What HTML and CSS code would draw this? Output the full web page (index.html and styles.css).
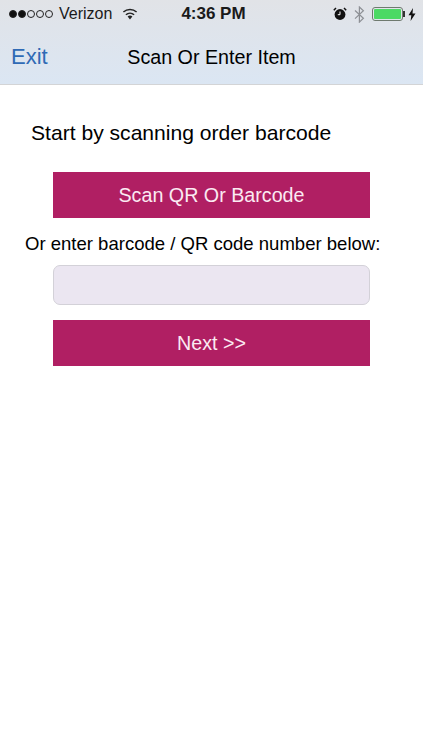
FILE: index.html
```html
<!DOCTYPE html>
<html lang="en">
<head>
  <meta charset="UTF-8" />
  <title>Scan Or Enter Item</title>
  <link rel="stylesheet" href="styles.css">
</head>
<body>
  <header class="top-bar">
    <div class="status-bar">
      <div class="status-left">
        <span class="signal">
          <i class="dot on"></i><i class="dot on"></i><i class="dot"></i><i class="dot"></i><i class="dot"></i>
        </span>
        <span class="carrier">Verizon</span>
        <svg class="wifi" width="16" height="12" viewBox="0 0 16 12">
          <path d="M8 11.5 5.6 8.6a3.6 3.6 0 0 1 4.8 0z" fill="#222"/>
          <path d="M3.9 6.8a6.2 6.2 0 0 1 8.2 0" fill="none" stroke="#222" stroke-width="1.5"/>
          <path d="M1.4 4a9.8 9.8 0 0 1 13.2 0" fill="none" stroke="#222" stroke-width="1.5"/>
        </svg>
      </div>
      <div class="status-time">4:36 PM</div>
      <div class="status-right">
        <svg width="14" height="14" viewBox="0 0 14 14">
          <circle cx="7" cy="7.5" r="5.4" fill="#111"/>
          <path d="M7 4.5v3.2H4.8" fill="none" stroke="#fff" stroke-width="1"/>
          <path d="M.8 3.2 3 1M13.2 3.2 11 1" stroke="#111" stroke-width="1.5"/>
        </svg>
        <svg width="11" height="17" viewBox="0 0 11 17">
          <path d="M1 4.5l8.4 7.8-4 3.8V1l4 3.8L1 12.6" fill="none" stroke="#8d9095" stroke-width="1.2"/>
        </svg>
        <div class="battery"><div class="battery-fill"></div></div>
        <svg width="8" height="13" viewBox="0 0 8 13">
          <path d="M5 0 .5 7.2h2.8L2.6 13 7.5 5.4H4.5z" fill="#111"/>
        </svg>
      </div>
    </div>
    <div class="nav-bar">
      <span class="nav-exit">Exit</span>
      <span class="nav-title">Scan Or Enter Item</span>
    </div>
  </header>

  <main class="content">
    <h1 class="lead">Start by scanning order barcode</h1>
    <button class="action">Scan QR Or Barcode</button>
    <p class="hint">Or enter barcode / QR code number below:</p>
    <input class="code-input" type="text" />
    <button class="action">Next &gt;&gt;</button>
  </main>
</body>
</html>
```

FILE: styles.css
```css
* {
  box-sizing: border-box;
}
body {
  margin: 0;
  background: #fff;
  color: #000;
  font-family: "Liberation Sans", Arial, sans-serif;
}
.top-bar {
  height: 85px;
  background: linear-gradient(#e1e3e7, #dbe6f3);
  border-bottom: 1px solid #d3d4d6;
}
.status-bar {
  height: 28px;
  padding: 0 7px 0 9px;
  display: grid;
  grid-template-columns: 1fr auto 1fr;
  align-items: center;
  font-size: 16px;
  color: #1a1a1a;
}
.status-left {
  display: flex;
  align-items: center;
}
.signal {
  display: flex;
  gap: 1px;
  margin-right: 6px;
}
.dot {
  width: 8px;
  height: 8px;
  border-radius: 50%;
  border: 1px solid #222;
}
.dot.on {
  background: #111;
}
.wifi {
  margin-left: 10px;
}
.status-time {
  margin-left: 2px;
  font-size: 17px;
  font-weight: bold;
}
.status-right {
  display: flex;
  align-items: center;
  justify-content: flex-end;
  gap: 7px;
}
.battery {
  position: relative;
  width: 31px;
  height: 14px;
  margin-right: -2px;
  padding: 1px;
  border: 1px solid #6f7a6f;
  border-radius: 3px;
}
.battery::after {
  content: "";
  position: absolute;
  right: -3px;
  top: 3px;
  width: 2px;
  height: 6px;
  background: #333;
}
.battery-fill {
  height: 100%;
  background: #4cd964;
  border-radius: 1px;
}
.nav-bar {
  position: relative;
  height: 56px;
  padding-top: 2px;
  display: flex;
  align-items: center;
  justify-content: center;
}
.nav-exit {
  position: absolute;
  left: 11px;
  font-size: 22px;
  color: #2f6ab5;
}
.nav-title {
  font-size: 19.7px;
}
.content {
  display: flex;
  flex-direction: column;
  align-items: center;
}
.lead {
  align-self: flex-start;
  margin: 35px 0 26px 31px;
  font-size: 21.1px;
  font-weight: normal;
  line-height: 26px;
}
.action {
  width: 317px;
  height: 46px;
  flex: none;
  border: 0;
  background: #b01f63;
  color: #fbeaf2;
  font-family: inherit;
  font-size: 19.7px;
}
.hint {
  align-self: flex-start;
  margin: 15px 0 10px 25px;
  font-size: 18.55px;
  line-height: 22px;
  white-space: nowrap;
}
.code-input {
  width: 317px;
  height: 40px;
  margin-bottom: 15px;
  background: #ebe6f1;
  border: 1px solid #d3d1d8;
  border-radius: 7px;
}
```
